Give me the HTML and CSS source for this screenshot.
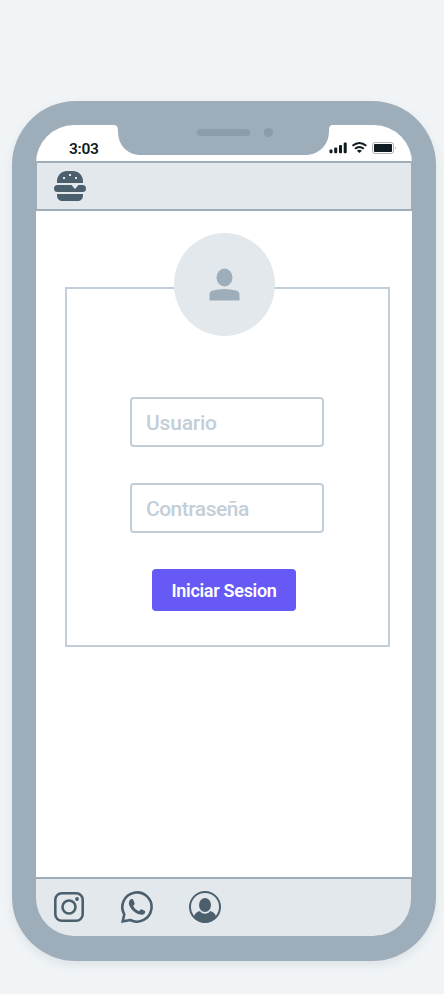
FILE: index.html
```html
<!DOCTYPE html>
<html lang="es">
<head>
<meta charset="utf-8">
<title>Iniciar Sesion</title>
<link rel="stylesheet" href="styles.css">
</head>
<body>
<div class="phone">
  <svg class="notch" width="220" height="30" viewBox="0 0 220 30">
    <path fill="#9eadba" d="M0 0C3.500 0 5 1.500 5 6C5 20 14 30 28 30H192C206 30 216 20 216 6C216 1.500 217 0 220 0Z"/>
    <rect x="84" y="4" width="53" height="7" rx="3.500" fill="#8b9cab"/>
    <circle cx="155.500" cy="7.500" r="4.600" fill="#8b9cab"/>
  </svg>
  <div class="screen">
    <div class="status">
      <span class="time">3:03</span>
      <svg class="signals" width="68" height="14" viewBox="0 0 68 14">
        <g fill="#101b22">
          <rect x=".5" y="8.500" width="3" height="3.700" rx="1"/>
          <rect x="5.200" y="6.500" width="3" height="5.700" rx="1"/>
          <rect x="10" y="4" width="3" height="8.200" rx="1"/>
          <rect x="14.700" y="1.500" width="3" height="10.700" rx="1"/>
          <path d="M27.900 9.700Q30.400 7.700 32.900 9.700L30.400 12Z"/>
        </g>
        <path d="M23.500 4.800Q30.400-.9 37.300 4.800M26 7.700Q30.400 4.200 34.800 7.700" fill="none" stroke="#101b22" stroke-width="2"/>
        <rect x="43.500" y="1.500" width="21" height="11" rx="2.500" fill="#fff" stroke="#b5b1b3"/>
        <rect x="45" y="3" width="18" height="8" rx=".8" fill="#101b22"/>
        <path d="M66 5.500Q68 7 66 8.500Z" fill="#b5b1b3"/>
      </svg>
    </div>
    <header class="topbar">
      <svg width="32" height="30" viewBox="0 0 32 30">
        <path fill="#4c5f6d" d="M3 12V10C3 4 8 0 13 0H19C24 0 29 4 29 10V12ZM3.500 14H17.500L21 18L24.500 14H28.500A3.500 3.500 0 0 1 28.500 21H3.500A3.500 3.500 0 0 1 3.500 14ZM3 23H29V24C29 28 27 30 23 30H9C5 30 3 28 3 24Z"/>
        <path fill="#e2e8ec" d="M9 6h2v2H9zM15 3h2v2h-2zM21 6h2v2h-2z"/>
      </svg>
    </header>
    <main>
      <form class="card">
        <div class="avatar">
          <svg width="31" height="33" viewBox="0 0 31 33">
            <ellipse cx="15.500" cy="9.500" rx="8" ry="9" fill="#9eadba"/>
            <path fill="#9eadba" d="M.5 32.500V27Q.5 23.500 4 22.600Q15.500 19.500 27 22.600Q30.500 23.500 30.500 27V32.500Z"/>
          </svg>
        </div>
        <div class="field"><span class="user">Usuario</span></div>
        <div class="field"><span class="password">Contraseña</span></div>
        <button type="button"><span>Iniciar Sesion</span></button>
      </form>
    </main>
    <footer class="bottombar">
      <svg width="30" height="30" viewBox="0 0 30 30" fill="none" stroke="#4c5f6d">
        <rect x="1.300" y="1.300" width="27.400" height="27.400" rx="6.500" stroke-width="2.600"/>
        <circle cx="15" cy="15" r="6.500" stroke-width="2.600"/>
        <circle cx="23" cy="7" r="1.900" fill="#4c5f6d" stroke="none"/>
      </svg>
      <svg width="32" height="32" viewBox="0 0 32 32">
        <path d="M1.700 30.300L3.300 23.300A14.600 14.600 0 1 1 9.300 29Z" fill="none" stroke="#4c5f6d" stroke-width="2.600"/>
        <path fill="#4c5f6d" d="M9.500 8.500C11 7.700 12 8.200 12.500 9.500L13.600 12.300C13.900 13.200 12.700 14.300 12.200 15C13.500 17.500 15.500 19.200 18.100 20.300C19 19.600 19.500 18.100 20.500 18.300L23.600 19.700C24.500 20.200 24.300 21.800 23.500 22.700C21.500 24.500 18 23.600 15 22C11.800 20 8.800 16.500 8 13.500C7.600 11.500 8.300 9.300 9.500 8.500Z"/>
      </svg>
      <svg width="32" height="32" viewBox="0 0 32 32">
        <circle cx="16" cy="16" r="15" fill="none" stroke="#4c5f6d" stroke-width="2"/>
        <ellipse cx="16" cy="14" rx="6" ry="7" fill="#4c5f6d"/>
        <path fill="#4c5f6d" d="M5 25.500C5.500 22.500 8 21 11 20C12.500 23.700 19.500 23.700 21 20C24 21 26.500 22.500 27 25.500C24 29.500 20.500 31.500 16 31.500S8 29.500 5 25.500Z"/>
      </svg>
    </footer>
  </div>
</div>
</body>
</html>
```
FILE: styles.css
```css
* { box-sizing: border-box; }
body {
  margin: 0;
  height: 994px;
  padding: 101px 8px 0 12px;
  overflow: hidden;
  background: #f0f4f7;
  font-family: Roboto, "Liberation Sans", sans-serif;
  font-weight: 500;
}
.phone {
  position: relative;
  width: 424px;
  height: 860px;
  padding: 24px 24px 25px;
  border-radius: 64px;
  background: #9eadba;
  box-shadow: 0 4px 10px rgba(60, 75, 90, .1);
}
.notch {
  position: absolute;
  top: 24px;
  left: 101px;
}
.screen {
  display: flex;
  flex-direction: column;
  height: 811px;
  overflow: hidden;
  border-radius: 38px;
  background: linear-gradient(#fff 752px, #9eadba 752px);
}
.status {
  display: flex;
  justify-content: space-between;
  height: 36px;
  padding: 15px 15px 0 33px;
}
.time {
  color: #101b22;
  font-size: 15.5px;
  font-weight: 600;
  line-height: 19px;
  letter-spacing: -.3px;
}
.signals { margin-top: 1px; }
.topbar {
  height: 50px;
  padding: 8px 17px;
  border: 2px solid #9eadba;
  border-width: 2px 1px;
  background: #e2e8ec;
}
main {
  flex: 1;
  padding: 76px 22px 0 29px;
}
.card {
  display: flex;
  flex-direction: column;
  align-items: flex-start;
  width: 325px;
  height: 360px;
  border: 2px solid #c3ced8;
}
.avatar {
  display: flex;
  align-items: center;
  justify-content: center;
  width: 101px;
  height: 103px;
  margin: -56px 0 61px 107px;
  border-radius: 50%;
  background: #e2e8ec;
}
.field {
  width: 194px;
  height: 50px;
  margin: 0 0 36px 63px;
  padding: 0 14px;
  border: 2px solid #c3ced8;
  border-radius: 4px;
  color: #c3ced8;
  font-size: 21px;
  font-weight: 500;
  line-height: 49px;
}
.user { letter-spacing: -.2px; }
.password { letter-spacing: -.5px; }
button {
  width: 144px;
  height: 42px;
  margin-left: 85px;
  padding: 1px 0 0;
  border: 0;
  border-radius: 4px;
  background: #6659f5;
  color: #fff;
  font: 600 18px Roboto, "Liberation Sans", sans-serif;
  letter-spacing: -.3px;
}
.bottombar {
  display: flex;
  align-items: center;
  gap: 36px;
  height: 59px;
  margin-right: 1px;
  padding: 0 18px 2px;
  border-top: 2px solid #9eadba;
  border-radius: 0 0 37px 0;
  background: #e2e8ec;
}
.bottombar svg:first-child { margin-right: 1px; }
```
